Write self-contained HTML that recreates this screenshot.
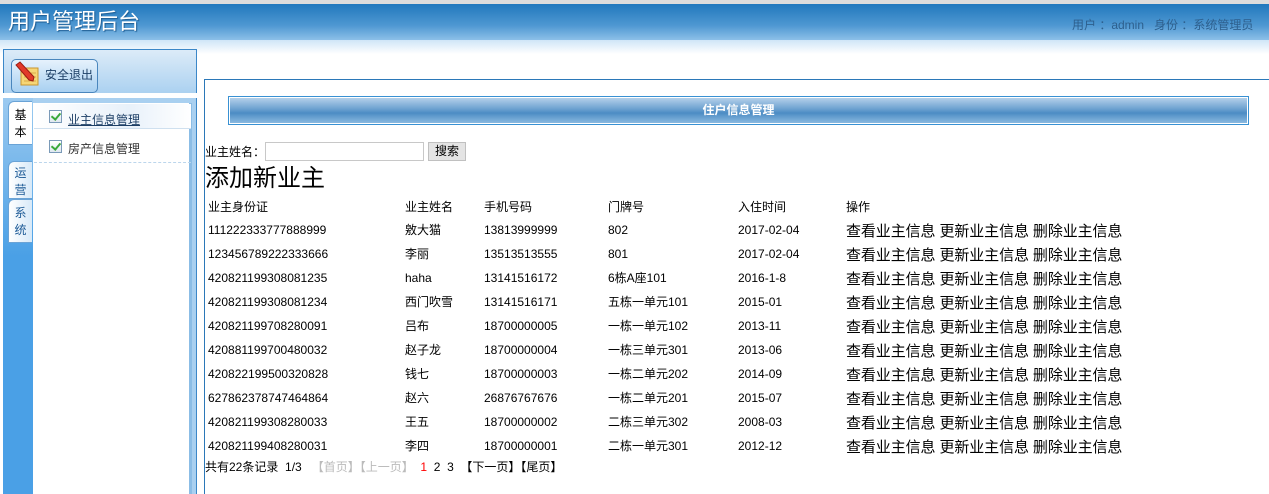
<!DOCTYPE html>
<html><head><meta charset="utf-8"><style>
*{margin:0;padding:0;box-sizing:border-box}
body{width:1269px;height:494px;overflow:hidden;background:#fff;font-family:"Liberation Sans","Noto Sans CJK SC",sans-serif;font-size:12px;color:#000;position:relative;line-height:16px}
.a{position:absolute;white-space:nowrap}
#top{position:absolute;left:0;top:0;width:1269px;height:4px;background:#dcdcdc}
#hdr{position:absolute;left:0;top:4px;width:1269px;height:36px;background:linear-gradient(#2178bd,#4f98d2 60%,#8cc0e8)}
#hdr2{position:absolute;left:0;top:40px;width:1269px;height:14px;background:linear-gradient(#cfe5f7,#fff)}
#side{position:absolute;left:3px;top:49px;width:194px;height:445px;border:1px solid #3b87c8;border-bottom:none;background:linear-gradient(#dcebf8,#a9d0f0 45px)}
#strip{position:absolute;left:3px;top:98px;width:30px;height:396px;background:linear-gradient(#9ccaf0,#4aa0e6 40%,#4aa0e6)}
#menu{position:absolute;left:33px;top:103px;width:159px;height:391px;background:#fff;border-right:3px solid #8bbde6}
.tab{position:absolute;left:8px;width:24px;background:linear-gradient(90deg,#fff,#d7e9f8);border:1px solid #6aa3d6;border-right:none;border-radius:6px 0 0 0;font-size:12px;line-height:17px;text-align:center;color:#1c5a96}
.chk{position:absolute;width:13px;height:13px;border:1px solid #7a9ab8;background:linear-gradient(#fff,#dfe8f0)}
.chk:after{content:"";position:absolute;left:3px;top:0;width:4px;height:7px;border:solid #3aa83a;border-width:0 2px 2px 0;transform:rotate(40deg)}
.bar{position:absolute;left:228px;top:96px;width:1021px;height:29px;border:1px solid #3991d3;padding:1px}
.bar div{width:100%;height:100%;background:linear-gradient(#b4d0ea,#6aa0cf 45%,#4c8cc4 60%,#8ab9e0);color:#fff;font-weight:bold;text-align:center;line-height:25px;font-size:12px}
.c{position:absolute;font-size:12px;white-space:nowrap;height:16px;line-height:16px}
.op{font-size:15px;line-height:18px;height:18px}
</style></head><body>
<div id="top"></div>
<div id="hdr"></div><div id="hdr2"></div>
<div class="a" style="left:8px;top:8px;font-size:22px;line-height:28px;color:#fff;text-shadow:1px 1px 1px #1d5c92">用户管理后台</div>
<div class="a" style="left:1072px;top:17px;font-size:12px;color:#2d5f8d">用户 ：admin &nbsp;&nbsp;身份 ：系统管理员</div>
<div id="side"></div>
<div class="a" style="left:11px;top:59px;width:87px;height:34px;border:1px solid #4a86bd;border-radius:5px;background:linear-gradient(#e6f2fc,#a8d0f1)"></div>
<svg class="a" style="left:14px;top:61px" width="26" height="26" viewBox="0 0 26 26"><rect x="7" y="7" width="17" height="17" fill="#f6d677" stroke="#c9952f"/><line x1="10" y1="12" x2="22" y2="12" stroke="#d9a94a"/><line x1="10" y1="16" x2="22" y2="16" stroke="#d9a94a"/><line x1="10" y1="20" x2="22" y2="20" stroke="#d9a94a"/><path d="M2 4 L6 1 L20 16 L19 20 L15 19 Z" fill="#e23a2a" stroke="#9b1c12"/></svg>
<div class="a" style="left:45px;top:67px;font-size:12px;color:#1d3f66">安全退出</div>
<div class="a" style="left:3px;top:93px;width:194px;height:5px;background:#fff"></div>
<div id="strip"></div>
<div id="menu"></div>
<div class="tab" style="top:101px;height:44px;background:#fff;color:#000;padding-top:5px;border-radius:6px 0 0 0">基<br>本</div>
<div class="tab" style="top:161px;height:38px;padding-top:3px">运<br>营</div>
<div class="tab" style="top:199px;height:44px;padding-top:5px">系<br>统</div>
<div class="a" style="left:34px;top:104px;width:157px;height:25px;background:linear-gradient(90deg,#fff,#e8f1fa 60%,#fff);border-bottom:1px solid #cfe0ef"></div>
<div class="chk" style="left:49px;top:110px"></div>
<div class="a" style="left:68px;top:112px;font-size:12px;color:#1d3f66;text-decoration:underline">业主信息管理</div>
<div class="chk" style="left:49px;top:140px"></div>
<div class="a" style="left:68px;top:141px;font-size:12px;color:#333">房产信息管理</div>
<div class="a" style="left:34px;top:162px;width:157px;border-top:1px dashed #bcd6ec"></div>
<div class="a" style="left:204px;top:79px;width:1065px;height:415px;border-left:1px solid #2b78b8;border-top:1px solid #2b78b8"></div>
<div class="bar"><div>住户信息管理</div></div>
<div class="a" style="left:205px;top:144px">业主姓名：</div>
<div class="a" style="left:265px;top:142px;width:159px;height:19px;border:1px solid #c8c8c8"></div>
<div class="a" style="left:428px;top:142px;width:38px;height:19px;border:1px solid #c0c0c0;background:#e4e4e4;text-align:center;line-height:17px">搜索</div>
<div class="a" style="left:205px;top:163px;font-size:24px;line-height:32px">添加新业主</div>
<div id="tbl"></div>
<script>
var rows=[["111222333777888999","敫大猫","13813999999","802","2017-02-04"],["123456789222333666","李丽","13513513555","801","2017-02-04"],["420821199308081235","haha","13141516172","6栋A座101","2016-1-8"],["420821199308081234","西门吹雪","13141516171","五栋一单元101","2015-01"],["420821199708280091","吕布","18700000005","一栋一单元102","2013-11"],["420881199700480032","赵子龙","18700000004","一栋三单元301","2013-06"],["420822199500320828","钱七","18700000003","一栋二单元202","2014-09"],["627862378747464864","赵六","26876767676","一栋二单元201","2015-07"],["420821199308280033","王五","18700000002","二栋三单元302","2008-03"],["420821199408280031","李四","18700000001","二栋一单元301","2012-12"]];
var xs=[208,405,484,608,738],h="";
var hd=["业主身份证","业主姓名","手机号码","门牌号","入住时间","操作"];
hd.forEach(function(t,i){h+='<div class="c" style="left:'+(i<5?xs[i]:846)+'px;top:199px">'+t+'</div>'});
rows.forEach(function(r,j){var y=222+j*24;r.forEach(function(t,i){h+='<div class="c" style="left:'+xs[i]+'px;top:'+y+'px">'+t+'</div>'});h+='<div class="c op" style="left:846px;top:'+(y+1)+'px;letter-spacing:-0.1px">查看业主信息 更新业主信息 删除业主信息</div>'});
document.getElementById('tbl').innerHTML=h;
</script>
<div class="a" style="left:205px;top:459px">共有22条记录 &nbsp;1/3 &nbsp;&nbsp;<span style="color:#bbb">【首页】【上一页】</span>&nbsp;&nbsp;<span style="color:red">1</span>&nbsp; 2 &nbsp;3 &nbsp;【下一页】【尾页】</div>
</body></html>
